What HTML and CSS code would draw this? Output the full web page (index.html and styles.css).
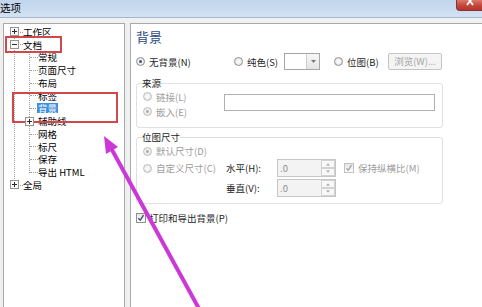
FILE: index.html
```html
<!DOCTYPE html>
<html>
<head lang="zh">
    <meta charset="UTF-8">
    <title>选项</title>
    <link rel="stylesheet" href="styles.css">
</head>
<body>
<div class="window">
    <div class="caption">
        <span class="caption-text">选项</span>
        <span class="close"><svg width="10" height="6" viewBox="0 0 10 6"><path d="M2 -3L8 5M8 -3L2 5" stroke="#fff" stroke-width="1.8"/></svg></span>
    </div>
    <div class="client">
        <div class="tree-pane">
            <ul class="tree">
                <li>
                    <div class="row"><svg class="box" viewBox="0 0 9 9"><rect x=".5" y=".5" width="8" height="8"/><path d="M2 4.5h5M4.5 2v5"/></svg>工作区</div>
                </li>
                <li>
                    <div class="row"><svg class="box" viewBox="0 0 9 9"><rect x=".5" y=".5" width="8" height="8"/><path d="M2 4.5h5"/></svg>文档</div>
                    <ul>
                        <li><div class="row"><span class="box"></span>常规</div></li>
                        <li><div class="row"><span class="box"></span>页面尺寸</div></li>
                        <li><div class="row"><span class="box"></span>布局</div></li>
                        <li><div class="row"><span class="box"></span>标签</div></li>
                        <li><div class="row"><span class="box"></span><span class="sel">背景</span></div></li>
                        <li><div class="row"><svg class="box" viewBox="0 0 9 9"><rect x=".5" y=".5" width="8" height="8"/><path d="M2 4.5h5M4.5 2v5"/></svg>辅助线</div></li>
                        <li><div class="row"><span class="box"></span>网格</div></li>
                        <li><div class="row"><span class="box"></span>标尺</div></li>
                        <li><div class="row"><span class="box"></span>保存</div></li>
                        <li><div class="row"><span class="box"></span>导出 HTML</div></li>
                    </ul>
                </li>
                <li>
                    <div class="row"><svg class="box" viewBox="0 0 9 9"><rect x=".5" y=".5" width="8" height="8"/><path d="M2 4.5h5M4.5 2v5"/></svg>全局</div>
                </li>
            </ul>
        </div>

        <div class="page">
            <h2 class="page-title">背景</h2>
            <div class="bg-row">
                <label class="opt opt-none"><span class="radio on"></span>无背景(N)</label>
                <label class="opt opt-solid"><span class="radio"></span>纯色(S)</label>
                <span class="color-pick"><span class="swatch"></span><span class="drop"><svg width="5" height="3" viewBox="0 0 5 3"><path d="M0 0h5L2.5 3z" fill="#7a7a7a"/></svg></span></span>
                <label class="opt opt-bitmap"><span class="radio"></span>位图(B)</label>
                <span class="btn">浏览(W)...</span>
            </div>

            <fieldset class="group source">
                <legend>来源</legend>
                <div class="source-body">
                    <div class="source-opts">
                        <label class="opt off src-opt"><span class="radio"></span>链接(L)</label>
                        <label class="opt off src-opt"><span class="radio on"></span>嵌入(E)</label>
                    </div>
                    <span class="field"></span>
                </div>
            </fieldset>

            <fieldset class="group size">
                <legend>位图尺寸</legend>
                <div class="size-row first">
                    <label class="opt off size-opt"><span class="radio on"></span>默认尺寸(D)</label>
                </div>
                <div class="size-row">
                    <label class="opt off size-opt"><span class="radio"></span>自定义尺寸(C)</label>
                    <span class="size-label">水平(H):</span>
                    <span class="spin"><span class="spin-val">.0</span><svg class="spin-btns" width="14" height="16" viewBox="0 0 14 16"><rect x=".5" y=".5" width="13" height="7"/><rect x=".5" y="8.5" width="13" height="7"/><path d="M5 5.5h4L7 3.5z M5 10.5h4L7 12.5z"/></svg></span>
                    <label class="opt off keep"><span class="check"><svg width="8" height="8" viewBox="0 0 8 8"><path d="M1.3 4.2l2 2 3.2-5"/></svg></span>保持纵横比(M)</label>
                </div>
                <div class="size-row last">
                    <span class="size-opt"></span>
                    <span class="size-label">垂直(V):</span>
                    <span class="spin"><span class="spin-val">.0</span><svg class="spin-btns" width="14" height="16" viewBox="0 0 14 16"><rect x=".5" y=".5" width="13" height="7"/><rect x=".5" y="8.5" width="13" height="7"/><path d="M5 5.5h4L7 3.5z M5 10.5h4L7 12.5z"/></svg></span>
                </div>
            </fieldset>

            <label class="opt print"><span class="check on"><svg width="8" height="8" viewBox="0 0 8 8"><path d="M1.3 4.2l2 2 3.2-5"/></svg></span>打印和导出背景(P)</label>
        </div>
    </div>

    <!-- annotation marks drawn over the dialog -->
    <svg class="marks" width="482" height="307" viewBox="0 0 482 307">
        <rect x="6" y="37" width="55" height="15"/>
        <rect x="13" y="93" width="104" height="29"/>
        <line x1="111" y1="148" x2="203" y2="316"/>
        <polygon points="104,136 106,154 118,147"/>
    </svg>
</div>
</body>
</html>
```

FILE: styles.css
```css
body {
    margin: 0;
    font-family: "Noto Sans CJK SC", "Microsoft YaHei", sans-serif;
    font-size: 9.5px;
    color: #1e1e1e;
}
.window {
    position: relative;
    width: 482px;
    height: 307px;
    overflow: hidden;
    background: #eef0f2;
}

/* caption bar */
.caption {
    display: flex;
    height: 17px;
    border-bottom: 1px solid #a7b7c9;
    background: linear-gradient(to bottom, #c1d5ed, #d3e2f3);
}
.caption-text {
    margin-left: 0;
    font-size: 10.5px;
    line-height: 15px;
    color: #000;
}
.close {
    display: flex;
    justify-content: center;
    width: 25px;
    height: 10px;
    margin-left: auto;
    border: 1px solid #8a3030;
    border-top: none;
    border-right: none;
    border-radius: 0 0 0 4px;
    background: linear-gradient(#d97a6c, #c4453b 55%, #b5352a);
}

.client {
    display: flex;
    align-items: flex-start;
    padding-top: 5px;
}

/* tree */
.tree-pane {
    flex: none;
    box-sizing: border-box;
    width: 122px;
    height: 300px;
    margin-left: 3px;
    padding-top: 1.6px;
    border: 1px solid #a9a9a9;
    background: #fff;
    color: #000;
}
.tree, .tree ul {
    position: relative;
    list-style: none;
    margin: 0;
    padding: 0;
}
.tree ul {
    margin-left: 15px;
}
.tree::before, .tree ul::before {
    content: "";
    position: absolute;
    left: 10px;
    top: 6px;
    bottom: 6px;
    border-left: 1px dotted #a0a0a0;
}
.tree ul::before {
    top: 0;
}
.row {
    position: relative;
    display: flex;
    align-items: center;
    height: 12.75px;
    padding-left: 6px;
    white-space: nowrap;
}
.row::before {
    content: "";
    position: absolute;
    left: 11px;
    top: 6px;
    width: 8px;
    border-top: 1px dotted #a0a0a0;
}
.box {
    position: relative;
    z-index: 1;
    flex: none;
    width: 9px;
    height: 9px;
    margin-right: 4px;
}
svg.box rect {
    fill: #fbfbfb;
    stroke: #949494;
}
svg.box path {
    stroke: #2a2a2a;
}
.sel {
    padding: 0 1px;
    margin-left: -1px;
    line-height: 10px;
    background: #3d8ede;
    color: #fff;
}

/* right page */
.page {
    flex: none;
    box-sizing: border-box;
    width: 420px;
    height: 300px;
    margin-left: 5px;
    padding: 6px 0 0 5px;
    border: 1px solid #a9a9a9;
    background: #fff;
}
.page-title {
    margin: 0;
    font-size: 13px;
    font-weight: normal;
    line-height: 14px;
    color: #2d4a86;
}
.opt {
    display: flex;
    align-items: center;
    white-space: nowrap;
}
.off {
    color: #9c9c9c;
}
.radio {
    position: relative;
    flex: none;
    box-sizing: border-box;
    width: 9px;
    height: 9px;
    margin-right: 4px;
    border: 1px solid #8e8e8e;
    border-radius: 50%;
    background: radial-gradient(#ffffff, #dedede);
}
.radio.on::after {
    content: "";
    position: absolute;
    left: 2px;
    top: 2px;
    width: 3px;
    height: 3px;
    border-radius: 50%;
    background: #46566b;
}
.off .radio {
    border-color: #bdbdbd;
}
.off .radio.on::after {
    background: #a8a8a8;
}
.check {
    display: flex;
    align-items: center;
    justify-content: center;
    flex: none;
    box-sizing: border-box;
    width: 10px;
    height: 10px;
    margin-right: 4px;
    border: 1px solid #8f8f8f;
    background: linear-gradient(#e6e6e6, #fdfdfd);
}
.check path {
    fill: none;
    stroke: #a4a4a4;
    stroke-width: 1.3;
}
.check.on path {
    stroke: #3d4c60;
}
.off .check {
    border-color: #c2c2c2;
}

.bg-row {
    display: flex;
    align-items: center;
    height: 17px;
    margin-top: 9px;
}
.opt-none {
    width: 98px;
}
.opt-solid {
    width: 50px;
}
.opt-bitmap {
    width: 54px;
    margin-left: 14px;
}
.color-pick {
    display: flex;
    box-sizing: border-box;
    width: 36px;
    height: 17px;
    border: 1px solid #a6a6a6;
}
.swatch {
    flex: 1;
    background: #fff;
}
.drop {
    display: flex;
    align-items: center;
    justify-content: center;
    width: 12px;
    border-left: 1px solid #cdcdcd;
    background: linear-gradient(#f7f7f7, #e4e4e4);
}
.btn {
    box-sizing: border-box;
    width: 54px;
    height: 17px;
    border: 1px solid #c4c4c4;
    border-radius: 2px;
    background: #f4f4f4;
    color: #a4a4a4;
    text-align: center;
    line-height: 15px;
}

.group {
    box-sizing: border-box;
    width: 307px;
    min-width: 0;
    margin: 7px 0 0;
    padding: 0 0 8px 5px;
    border: 1px solid #dde0e4;
    border-radius: 3px;
}
.group legend {
    padding: 0;
    line-height: 12px;
    color: #222;
}
.source-body {
    display: flex;
    align-items: flex-start;
}
.source-opts {
    width: 81px;
    padding-left: 1px;
}
.src-opt {
    height: 15px;
}
.field {
    box-sizing: border-box;
    width: 211px;
    height: 17px;
    margin-top: 5px;
    border: 1px solid #adb0b6;
    background: #fff;
}

.size {
    margin-top: 3px;
    padding-bottom: 6px;
}
.size-row {
    display: flex;
    align-items: center;
    height: 18px;
}
.size-row.first {
    height: 16px;
}
.size-row.last {
    margin-top: 2px;
}
.size-opt {
    box-sizing: border-box;
    width: 84px;
    padding-left: 1px;
}
.size-label {
    width: 51px;
    color: #1e1e1e;
}
.spin {
    display: flex;
    align-items: center;
    box-sizing: border-box;
    width: 59px;
    height: 18px;
    border: 1px solid #c6c6c6;
    background: #f3f3f3;
}
.spin-val {
    flex: 1;
    padding-left: 2px;
    color: #8c8c8c;
}
.spin-btns rect {
    fill: #f8f8f8;
    stroke: #d2d2d2;
}
.spin-btns path {
    fill: #a0a0a0;
}
.keep {
    margin-left: 8px;
}
.print {
    height: 14px;
    margin-top: 7px;
}
.print .check {
    margin-right: 3px;
}

/* annotations */
.marks {
    position: absolute;
    left: 0;
    top: 0;
    pointer-events: none;
}
.marks rect {
    fill: none;
    stroke: #d0484a;
    stroke-width: 2;
}
.marks line {
    stroke: #cc38d8;
    stroke-width: 4;
}
.marks polygon {
    fill: #cc38d8;
}
```
